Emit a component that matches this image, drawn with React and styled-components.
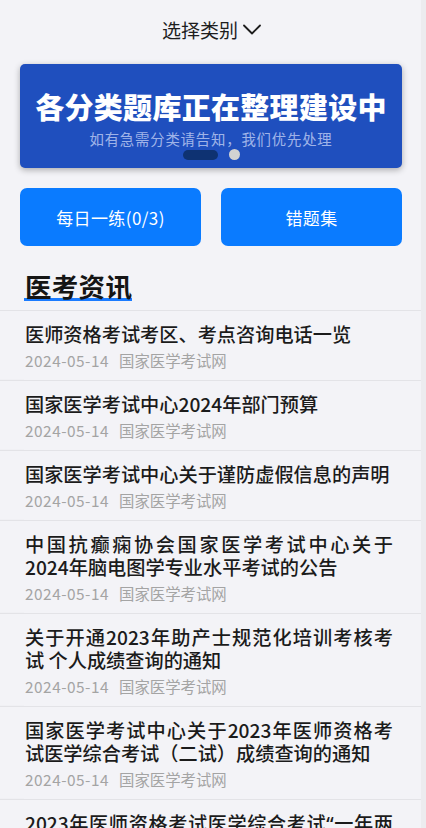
import React from 'react';
import styled, { createGlobalStyle } from 'styled-components';

const GlobalStyle = createGlobalStyle`
  body {
    margin: 0;
    background: #ececef;
    font-family: "Noto Sans CJK SC", "Noto Sans", sans-serif;
  }
`

const Page = styled.div`
  width: 421px;
  min-height: 828px;
  background: #f3f3f7;
`

const Header = styled.div`
  height: 58px;
  display: flex;
  align-items: center;
  justify-content: center;
  gap: 5px;
  font-size: 19px;
  color: #1d1d1d;
  padding-left: 2px;
`

const Banner = styled.div`
  position: relative;
  margin: 6px 19px 0 20px;
  height: 104px;
  background: #1f4fbe;
  border-radius: 5px;
  box-shadow: 0 2px 6px rgba(0, 0, 0, 0.3);
  display: flex;
  flex-direction: column;
  align-items: center;
  padding-top: 24px;
  box-sizing: border-box;
  color: #fff;
`

const BannerTitle = styled.div`
  font-size: 29px;
  font-weight: 900;
  line-height: 36px;
  letter-spacing: 0.3px;
`

const BannerSub = styled.div`
  margin-top: 5px;
  font-size: 14.4px;
  line-height: 20px;
  letter-spacing: 0.8px;
  color: rgba(225, 232, 255, 0.68);
`

const Dots = styled.div`
  position: absolute;
  bottom: 8px;
  left: 0;
  right: 0;
  display: flex;
  align-items: center;
  justify-content: center;
  gap: 11px;
`

const Dot = styled.span`
  display: block;
  height: ${p => p.active ? '10px' : '11px'};
  width: ${p => p.active ? '35px' : '11px'};
  border-radius: 6px;
  background: ${p => p.active ? '#0e3272' : '#d2d2d2'};
`

const Actions = styled.div`
  display: grid;
  grid-template-columns: 1fr 1fr;
  gap: 20px;
  margin: 20px 19px 0 20px;
`

const ActionBtn = styled.button`
  height: 58px;
  border: none;
  border-radius: 7px;
  background: #0a7bff;
  color: #fff;
  font-family: inherit;
  font-size: 17px;
  letter-spacing: 0.4px;
`

const SectionHead = styled.div`
  padding: 24px 0 8px 25px;
  border-bottom: 1px solid #e3e3e7;
`

const SectionTitle = styled.span`
  display: inline-block;
  font-size: 26.5px;
  font-weight: 700;
  line-height: 31px;
  letter-spacing: 0.3px;
  color: #151515;
  background: linear-gradient(#1a7bff, #1a7bff) no-repeat;
  background-size: 100% 3px;
  background-position: 0 100%;
  margin-left: -1px;
  padding-left: 1px;
`

const List = styled.div`
  display: flex;
  flex-direction: column;
`

const Item = styled.div`
  padding: 12px 28px 9px 25px;
  border-bottom: 1px solid #e3e3e7;
  background-image: linear-gradient(#f0f0f4, #f0f0f4);
  background-size: 24px 1px;
  background-position: 0 100%;
  background-repeat: no-repeat;
`

const ItemTitle = styled.div`
  font-size: 19.2px;
  font-weight: 500;
  line-height: 23px;
  color: #1b1b1b;
  text-align: justify;
`

const Quote = styled.span`
  font-family: "Noto Sans", sans-serif;
`

const Meta = styled.div`
  margin-top: 3px;
  display: flex;
  gap: 10px;
  font-size: 15.4px;
  line-height: 22px;
  color: #a4a4a4;
`

const DateText = styled.span`
  letter-spacing: 0.5px;
`

const news = [
  '医师资格考试考区、考点咨询电话一览',
  '国家医学考试中心2024年部门预算',
  '国家医学考试中心关于谨防虚假信息的声明',
  '中国抗癫痫协会国家医学考试中心关于2024年脑电图学专业水平考试的公告',
  '关于开通2023年助产士规范化培训考核考试 个人成绩查询的通知',
  '国家医学考试中心关于2023年医师资格考试医学综合考试（二试）成绩查询的通知',
  '2023年医师资格考试医学综合考试“一年两试”第二次考试成绩查询的通知',
];

// curly quotes are set narrow in the original, the CJK font draws them full width
function renderTitle(text) {
  return text.split(/([“”])/).map((part, i) =>
    part === '“' || part === '”' ? <Quote key={i}>{part}</Quote> : part
  );
}

function Chevron() {
  return (
    <svg width="18" height="11" viewBox="0 0 18 11" fill="none">
      <path d="M1 1.5 L9 9.5 L17 1.5" stroke="#1d1d1d" strokeWidth="1.8" strokeLinecap="round" strokeLinejoin="round" />
    </svg>
  );
}

export default function App() {
  return (
    <Page>
      <GlobalStyle />
      <Header>
        <span>选择类别</span>
        <Chevron />
      </Header>

      <Banner>
        <BannerTitle>各分类题库正在整理建设中</BannerTitle>
        <BannerSub>如有急需分类请告知，我们优先处理</BannerSub>
        <Dots>
          <Dot active />
          <Dot />
        </Dots>
      </Banner>

      <Actions>
        <ActionBtn>每日一练(0/3)</ActionBtn>
        <ActionBtn>错题集</ActionBtn>
      </Actions>

      <SectionHead>
        <SectionTitle>医考资讯</SectionTitle>
      </SectionHead>

      <List>
        {news.map((t, i) => (
          <Item key={i}>
            <ItemTitle>{renderTitle(t)}</ItemTitle>
            <Meta>
              <DateText>2024-05-14</DateText>
              <span>国家医学考试网</span>
            </Meta>
          </Item>
        ))}
      </List>
    </Page>
  );
}
